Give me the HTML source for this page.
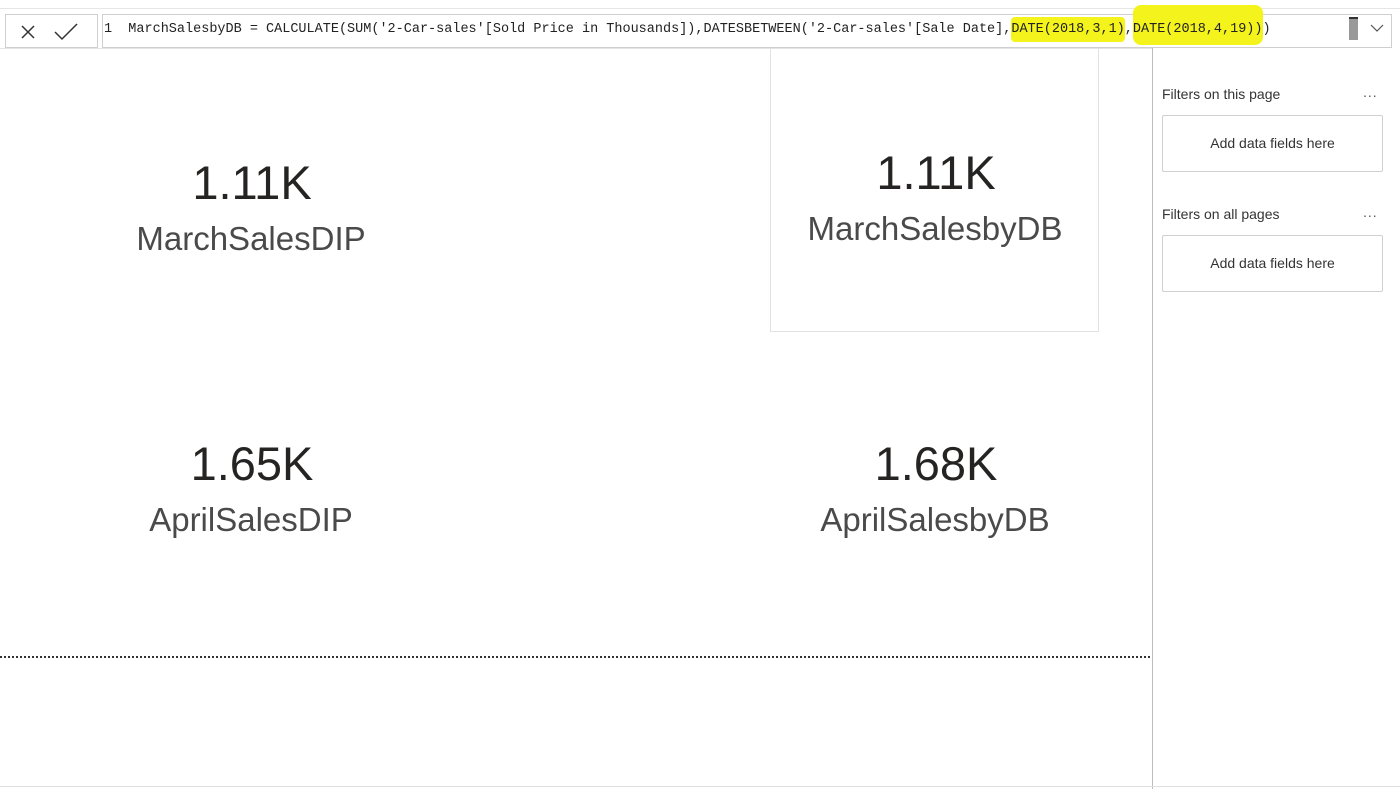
<!DOCTYPE html>
<html><head><meta charset="utf-8"><style>
*{margin:0;padding:0;box-sizing:border-box}
body{width:1400px;height:789px;background:#fff;position:relative;overflow:hidden;font-family:"Liberation Sans",sans-serif}
.abs{position:absolute}
.num{position:absolute;width:400px;text-align:center;font-size:47px;color:#252423;line-height:1}
.lbl{position:absolute;width:400px;text-align:center;font-size:33px;color:#4a4a4a;line-height:1}
.code{position:absolute;left:104px;top:21px;font-family:"Liberation Mono",monospace;font-size:13.5px;color:#222;white-space:pre;line-height:18px}
.hl{background:#f4f41c;border-radius:4px;padding:5px 0}
.hl2{background:#f4f41c;border-radius:8px;padding:17px 0 8px}
.box{position:absolute;left:1162px;width:221px;height:57px;border:1px solid #d0d0d0;border-radius:2px;font-size:14px;color:#333;text-align:center;line-height:55px}
.ft{position:absolute;left:1162px;font-size:14px;color:#333}
.dots{position:absolute;left:1363px;font-size:14px;color:#555;letter-spacing:1px}
</style></head><body>
<div class="abs" style="left:0;top:8px;width:1400px;height:1px;background:#e6e6e6"></div>
<div class="abs" style="left:5px;top:14px;width:93px;height:34px;border:1px solid #cfcfcf;background:#fff"></div>
<svg class="abs" style="left:18px;top:21px" width="66" height="22" viewBox="0 0 66 22">
<path d="M4 5 L16 17 M16 5 L4 17" stroke="#333" stroke-width="1.5" fill="none"/>
<path d="M37 11 L44 18 L59 3" stroke="#333" stroke-width="1.5" fill="none"/>
</svg>
<div class="abs" style="left:102px;top:14px;width:1290px;height:34px;border:1px solid #cfcfcf"></div>
<div class="code">1  MarchSalesbyDB = CALCULATE(SUM('2-Car-sales'[Sold Price in Thousands]),DATESBETWEEN('2-Car-sales'[Sale Date],<span class="hl">DATE(2018,3,1)</span>,<span class="hl2">DATE(2018,4,19))</span>)</div>
<div class="abs" style="left:1349px;top:17px;width:9px;height:23px;background:#999;border-top:2px solid #333"></div>
<svg class="abs" style="left:1369px;top:22px" width="16" height="12"><path d="M2 3 L8 9 L14 3" stroke="#555" stroke-width="1.2" fill="none"/></svg>

<div class="abs" style="left:0;top:48px;width:1152px;height:1px;background:#e4e4e4"></div>
<div class="abs" style="left:770px;top:48px;width:329px;height:284px;border:1px solid #e2e2e2;border-top:none"></div>
<div class="abs" style="left:1152px;top:48px;width:1px;height:741px;background:#bcbcbc"></div>

<div class="num" style="left:52px;top:159px">1.11K</div>
<div class="lbl" style="left:51px;top:222px">MarchSalesDIP</div>
<div class="num" style="left:736px;top:149px">1.11K</div>
<div class="lbl" style="left:735px;top:212px">MarchSalesbyDB</div>
<div class="num" style="left:52px;top:440px">1.65K</div>
<div class="lbl" style="left:51px;top:503px">AprilSalesDIP</div>
<div class="num" style="left:736px;top:440px">1.68K</div>
<div class="lbl" style="left:735px;top:503px">AprilSalesbyDB</div>

<div class="abs" style="left:0;top:656px;width:1150px;height:0;border-top:2px dotted #333"></div>
<div class="abs" style="left:0;top:786px;width:1400px;height:1px;background:#e0e0e0"></div>

<div class="ft" style="top:86px">Filters on this page</div>
<div class="dots" style="top:84px">...</div>
<div class="box" style="top:115px">Add data fields here</div>
<div class="ft" style="top:206px">Filters on all pages</div>
<div class="dots" style="top:204px">...</div>
<div class="box" style="top:235px">Add data fields here</div>
</body></html>
